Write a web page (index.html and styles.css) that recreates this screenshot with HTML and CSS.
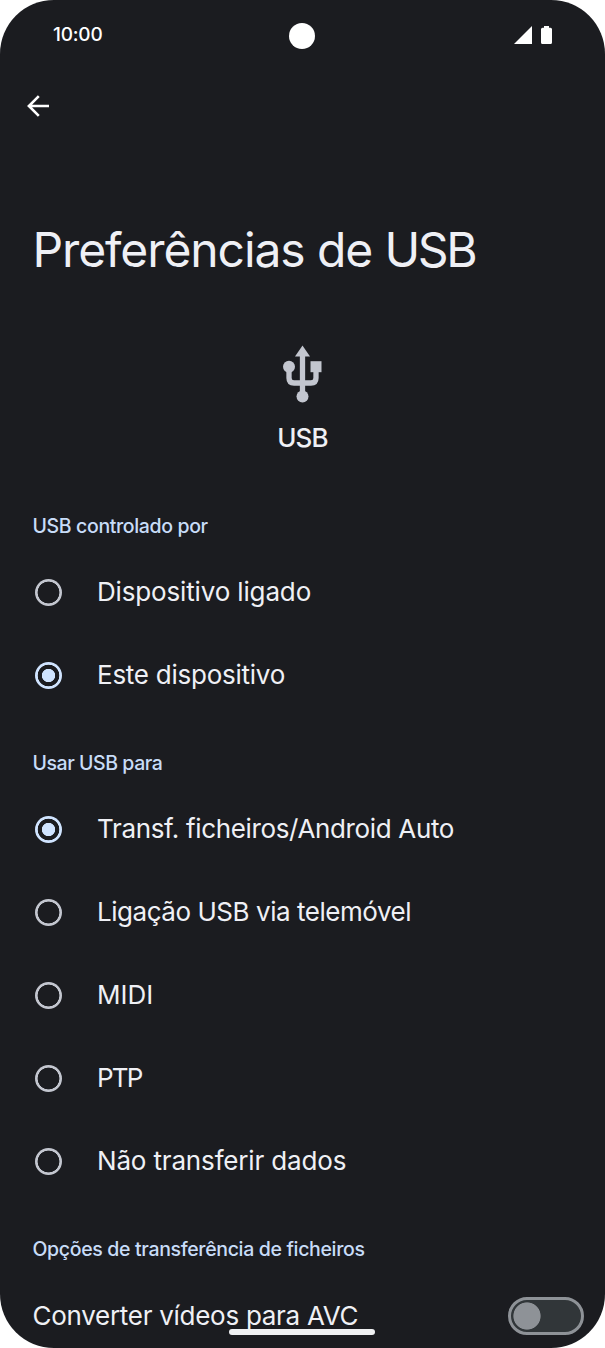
FILE: index.html
```html
<!DOCTYPE html>
<html lang="pt">
<head>
<meta charset="utf-8">
<title>Preferências de USB</title>
<link rel="stylesheet" href="styles.css">
</head>
<body>
<main class="phone">
  <header class="status">
    <span class="clock">10:00</span>
    <span class="camera"></span>
    <span class="status-icons">
      <svg width="18" height="18" viewBox="0 0 18 18"><path d="M18 0V18H0Z" fill="#fff"/></svg>
      <svg width="11" height="18" viewBox="0 0 11 18"><path d="M3 0h5v1.700h1.500Q11 1.700 11 3.200V16.500Q11 18 9.500 18h-8Q0 18 0 16.500V3.200Q0 1.700 1.500 1.700H3Z" fill="#fff"/></svg>
    </span>
  </header>
  <nav class="toolbar">
    <svg width="22" height="22" viewBox="0 0 22 22" fill="none" stroke="#fff" stroke-width="2.600"><path d="M22 11H2M11.800 1.100 1.900 11l9.900 9.900"/></svg>
  </nav>
  <h1 class="title">Preferências de <span class="title-usb">USB</span></h1>
  <section class="hero">
    <svg width="40" height="58" viewBox="0 0 40 58"><g fill="#c3c6cf"><path d="M19.500 0.500 27 11.500H12Z"/><circle cx="6" cy="21.700" r="6"/><path d="M27.500 16.200h11v11h-11Z"/><circle cx="19.500" cy="51.500" r="6"/></g><path d="M19.500 10V48M6 22v11q0 5 5 5h17q5 0 5-5V24" fill="none" stroke="#c3c6cf" stroke-width="5.300"/></svg>
    <span class="hero-label">USB</span>
  </section>

  <h2 class="section"><span class="controlled">USB controlado por</span></h2>
  <div class="row"><span class="radio"></span><span class="connected">Dispositivo ligado</span></div>
  <div class="row"><span class="radio on"></span><span class="this-device">Este dispositivo</span></div>

  <h2 class="section"><span class="use-for">Usar USB para</span></h2>
  <div class="row"><span class="radio on"></span><span class="transfer">Transf. ficheiros/Android Auto</span></div>
  <div class="row"><span class="radio"></span><span class="tether">Ligação USB via telemóvel</span></div>
  <div class="row"><span class="radio"></span><span>MIDI</span></div>
  <div class="row"><span class="radio"></span><span class="ptp">PTP</span></div>
  <div class="row"><span class="radio"></span><span class="no-data">Não transferir dados</span></div>

  <h2 class="section"><span class="options">Opções de transferência de ficheiros</span></h2>
  <div class="row switch-row"><span class="convert">Converter vídeos para AVC</span><span class="switch"></span></div>
  <span class="home-bar"></span>
</main>
</body>
</html>
```
FILE: styles.css
```css
* { box-sizing: border-box; }
body { margin: 0; background: #fff; font-family: Inter, "Liberation Sans", sans-serif; }
svg { display: block; }
.phone {
  position: relative;
  width: 605px;
  height: 1348px;
  overflow: hidden;
  border-radius: 54px;
  background: #1b1c20;
  color: #eff0f5;
}
.status {
  display: grid;
  grid-template-columns: 1fr 26px 1fr;
  align-items: center;
  height: 70px;
  padding: 0 53px 0 52px;
}
.clock { font-size: 19px; font-weight: 500; color: #fff; line-height: 24px; letter-spacing: -0.2px; padding-left: 1px; }
.camera { width: 26px; height: 26px; border-radius: 50%; background: #fff; margin-top: 2px; }
.status-icons { display: flex; justify-content: flex-end; gap: 9px; }
.toolbar { height: 72px; padding: 25px 0 0 27px; }
.title { margin: 0; padding: 76px 0 0 32.500px; height: 203px; font-size: 48px; line-height: 64px; font-weight: 400; letter-spacing: -1.1px; white-space: nowrap; }
.title-usb { letter-spacing: -2.400px; }
.hero { height: 134.500px; display: flex; flex-direction: column; align-items: center; gap: 19px; }
.hero-label { font-size: 26px; line-height: 32px; font-weight: 500; letter-spacing: -0.8px; }
.section { margin: 0; height: 71px; padding: 32px 0 0 32.500px; font-size: 19.500px; line-height: 28px; font-weight: 500; color: #c8dcf8; white-space: nowrap; }
.row { height: 83px; display: flex; align-items: center; gap: 35px; padding: 0 22px 0 35px; font-size: 26px; line-height: 32px; white-space: nowrap; }
.radio { flex: none; width: 27px; height: 27px; border-radius: 50%; background: radial-gradient(circle, transparent 10.600px, #c3c6cf 11.200px); }
.radio.on { background: radial-gradient(circle, #d0e4ff 6.300px, transparent 7px, transparent 10.500px, #d0e4ff 11.100px); }
.controlled { letter-spacing: -0.36px; }
.use-for { letter-spacing: -0.44px; }
.options { letter-spacing: -0.34px; }
.connected { letter-spacing: -0.15px; }
.this-device { letter-spacing: -0.25px; }
.transfer { letter-spacing: -0.35px; }
.tether { letter-spacing: -0.46px; }
.ptp { letter-spacing: -1.800px; }
.no-data { letter-spacing: -0.16px; }
.convert { letter-spacing: -0.28px; }
.switch-row { justify-content: space-between; padding-left: 32.500px; padding-right: 21.500px; }
.convert { padding-top: 1px; }
.switch { width: 76px; height: 38px; margin-top: 2px; border: 3px solid #8e9297; border-radius: 19px; background: radial-gradient(circle at 16px 16px, #8e9297 13.200px, #313639 14px); }
.home-bar { position: absolute; left: 229px; top: 1329px; width: 146px; height: 6px; border-radius: 3px; background: #eff0f2; }
```
